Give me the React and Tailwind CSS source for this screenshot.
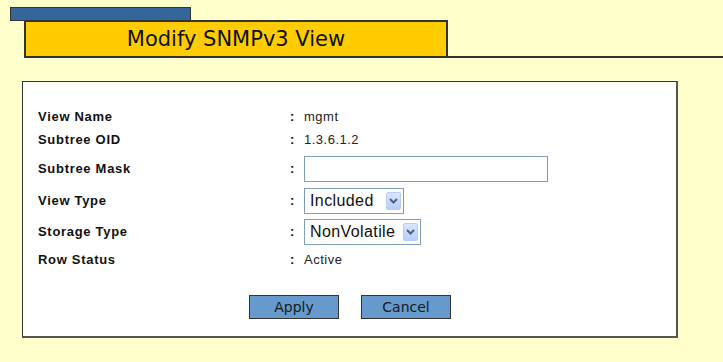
import React from "react";

const labelCls = "w-[252px] font-bold text-[13px] tracking-[0.7px] text-[#111]";
const colonCls = "w-[14px] font-bold text-[13px] text-[#111]";
const valueCls = "text-[13px] tracking-[0.5px] text-[#222]";
const btnCls = "w-[90px] h-[24px] bg-[#6699cc] border border-[#333] text-[14px] text-[#1a1a1a] leading-none flex items-center justify-center";

function Row({label, h, children}) {
	return (
		<div className={`flex items-center ${h}`}>
			<div className={labelCls}>{label}</div>
			<div className={colonCls}>:</div>
			<div className="flex items-center">{children}</div>
		</div>
	);
}

function Select({value, width}) {
	return (
		<div className={`${width} h-[26px] border border-[#7f9db9] bg-white flex items-center justify-between pl-[5px] pr-[2px]`}>
			<span className="text-[16px] tracking-[0.4px] text-[#111] leading-none">{value}</span>
			<span className="w-[15px] h-[18px] rounded-[2px] border border-[#b8cdf6] bg-gradient-to-b from-[#dbe6fd] to-[#b7cdfb] flex items-center justify-center">
				<svg width="9" height="6" viewBox="0 0 9 6">
					<path d="M1 1 L4.5 4.5 L8 1" fill="none" stroke="#4d6185" strokeWidth="2" />
				</svg>
			</span>
		</div>
	);
}

export default function App() {
	return (
		<div className="w-[723px] h-[362px] bg-[#ffffcc] overflow-hidden font-['Liberation_Sans',Arial,sans-serif]">
			<div className="pt-[7px] pl-[10px]">
				<div className="w-[181px] h-[14px] bg-[#336699] border border-[#333]" />
			</div>
			<div className="flex items-end -mt-px">
				<div className="ml-[24px] w-[424px] h-[38px] bg-[#ffcc00] border-2 border-[#333] flex items-center justify-center">
					<span className="font-['DejaVu_Sans',Verdana,sans-serif] text-[21px] text-[#111] leading-none">Modify SNMPv3 View</span>
				</div>
				<div className="flex-1 border-b-2 border-[#333]" />
			</div>
			<div className="mt-[23px] ml-[22px] w-[656px] h-[257px] bg-white border-l border-t border-r-2 border-b-2 border-l-[#333] border-t-[#333] border-r-[#555] border-b-[#555] pl-[15px] pt-[24px]">
				<Row label="View Name" h="h-[22px]">
					<span className={valueCls}>mgmt</span>
				</Row>
				<Row label="Subtree OID" h="h-[24px]">
					<span className={valueCls}>1.3.6.1.2</span>
				</Row>
				<Row label="Subtree Mask" h="h-[34px]">
					<div className="w-[244px] h-[26px] border border-[#7f9db9] bg-white" />
				</Row>
				<Row label="View Type" h="h-[30px]">
					<Select value="Included" width="w-[100px]" />
				</Row>
				<Row label="Storage Type" h="h-[32px]">
					<Select value="NonVolatile" width="w-[117px]" />
				</Row>
				<Row label="Row Status" h="h-[24px]">
					<span className={valueCls}>Active</span>
				</Row>
				<div className="mt-[23px] flex gap-[22px] pl-[211px] font-['DejaVu_Sans',Verdana,sans-serif]">
					<div className={btnCls}>Apply</div>
					<div className={btnCls}>Cancel</div>
				</div>
			</div>
		</div>
	);
}
